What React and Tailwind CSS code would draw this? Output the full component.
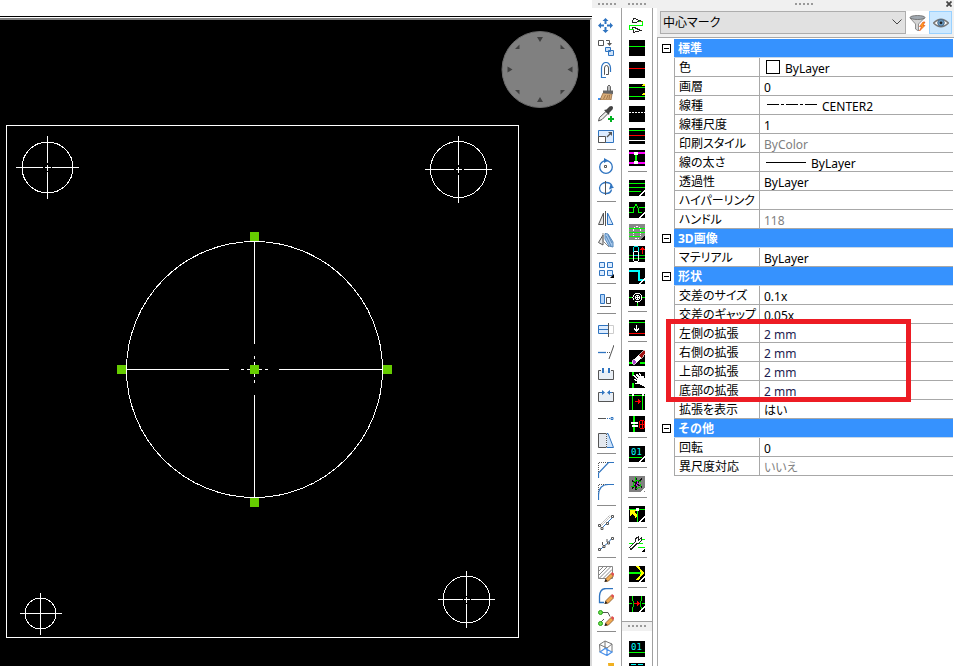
import React, { useState } from "react";

const BLUE = "#2f74c0";
const GREY = "#555555";
const LIME = "#00ff00";

const Pencil = () => (
  <g>
    <path d="M7 16l1-3.500L13 7.500l2.500 2.500L10.500 15z" fill="#f0a850" stroke="#7a4a20" strokeWidth=".7" />
    <path d="M13 7.500l1-1.500 2 1.500v1.500L15 10z" fill="#e05050" />
    <path d="M6.500 16l1-3 2 2z" fill="#222" />
  </g>
);

const modifyIcons = {
  Move: (
    <g fill={BLUE}>
      <path d="M7.500 0L10.500 3H8.500v3H6.500V3H4.500zM7.500 15L10.500 12H8.500V9H6.500v3H4.500zM0 7.500L3 4.500v2h3v2H3v2zM15 7.500L12 4.500v2H9v2h3v2z" />
    </g>
  ),
  Copy: (
    <g fill="none">
      <path d="M.5.5h5v5h-5z" stroke={GREY} />
      <path d="M8 .5h3.500V4" stroke={GREY} />
      <path d="M9 3h5l-2.500 3z" fill={GREY} />
      <path d="M7.500 7.500h5v4h-5zM10.500 10.500h5v5h-5z" fill="#cfe3fa" stroke={BLUE} />
    </g>
  ),
  Offset: (
    <g fill="none">
      <path d="M8 15.500H3.500V6a4.500 5.500 0 019 0v4" stroke={BLUE} strokeWidth="1.200" />
      <path d="M7 12.500h-.5V6a2 2.500 0 014 0v6.500H8" stroke={GREY} />
    </g>
  ),
  "Match properties": (
    <g>
      <path d="M0 15h9" stroke="#4090f0" strokeWidth="2" />
      <path d="M5 9l9 1-1 6H2z" fill="#d8ac78" stroke="#8a6038" strokeWidth=".7" />
      <path d="M5.500 15l2-4M8.500 15l1.500-4M11 15l.5-4" stroke="#8a6038" strokeWidth=".7" />
      <path d="M5 6.500h10V10L5 9z" fill="#666" />
      <path d="M9.500 7V2.500Q11-.5 12.500 2.500V7z" fill="#bbb" stroke="#666" />
    </g>
  ),
  "Pick properties": (
    <g>
      <path d="M.5 15l1-3.500L8 5.500l2 2L4 13.500z" fill="#eee" stroke="#555" />
      <path d="M6 4l2.500-.5 3-3q2-1 3 0t0 3l-3 3-.5 2.500z" fill="#444" />
      <path d="M10 13h6M13 10v6" stroke="#00b020" strokeWidth="2" />
    </g>
  ),
  Scale: (
    <g>
      <path d="M.5 2.500h15v12H.5z" fill="#dcecff" stroke={BLUE} />
      <path d="M.5 8.500h7v6h-7z" fill="#fff" stroke={GREY} />
      <path d="M9 9l4-4" stroke={GREY} strokeWidth="1.200" />
      <path d="M10 4h4v4z" fill={GREY} />
    </g>
  ),
  Rotate: (
    <g fill="none">
      <circle cx="8" cy="9" r="6.300" stroke={BLUE} strokeWidth="1.300" />
      <path d="M6.500 7.500h2v2h-2z" stroke={GREY} />
      <path d="M6 0v5l4.500-2.500z" fill={BLUE} />
    </g>
  ),
  "3D rotate": (
    <g fill="none">
      <path d="M14 6C13 3 10 2.500 8 2.500S1.500 4 1.500 8 5 13.500 8 13.500s5-1.500 5.500-4" stroke={BLUE} strokeWidth="1.300" />
      <path d="M7.500 1v14" stroke={GREY} />
      <path d="M11 9.500l5-2-3.500-3z" fill={BLUE} />
    </g>
  ),
  Mirror: (
    <g>
      <path d="M.5 14.500h5V3z" fill="#e8e8e8" stroke={GREY} />
      <path d="M7.500 1v15" stroke={GREY} />
      <path d="M9.500 3v11.500h5.500z" fill="#cfe3fa" stroke={BLUE} />
    </g>
  ),
  "3D mirror": (
    <g>
      <path d="M.5 10.500L5 3v10z" fill="#e8e8e8" stroke={GREY} />
      <path d="M5 1v8l6 6" fill="none" stroke="#888" />
      <path d="M7 1.500l3 .5 5 8v5l-4-1-4-7z" fill="#a8c8ec" stroke="#5588bb" />
      <path d="M8 4l5 10M10 3l4 8" stroke="#5588bb" />
    </g>
  ),
  Array: (
    <g>
      <path d="M1.500.5h5v5h-5zM9.500.5h5v5h-5zM1.500 8.500h5v5h-5zM9.500 8.500h5v5h-5z" fill="#dcecff" stroke={BLUE} />
      <path d="M16 12v4h-4z" fill="#000" />
    </g>
  ),
  Align: (
    <g>
      <path d="M2.500 2.500h4v9h-4z" fill="#b8d6f8" stroke={BLUE} />
      <path d="M8.500 5.500h4v6h-4z" fill="#fff" stroke={GREY} />
      <path d="M2 14.500h11" stroke={GREY} />
    </g>
  ),
  Trim: (
    <g>
      <path d="M10 3.500h5.500v8H10" fill="none" stroke="#ccc" />
      <path d="M10 3.500H.5v8H10" fill="#dcecff" stroke={BLUE} />
      <path d="M0 7.500h10" stroke={BLUE} />
      <path d="M10.500 1v14" stroke={GREY} />
    </g>
  ),
  Extend: (
    <g>
      <path d="M0 8.500h8" stroke={BLUE} strokeWidth="1.300" />
      <path d="M9 8.500h3" stroke={GREY} strokeDasharray="1 1" />
      <path d="M11 15l5-14" stroke={GREY} />
    </g>
  ),
  Break: (
    <g>
      <path d="M3 4.500H.5v9h15v-9H13" fill="#e8eef5" stroke={GREY} />
      <path d="M5 2v5M11 2v5" stroke={BLUE} strokeWidth="2" />
    </g>
  ),
  Join: (
    <g>
      <path d="M2 4.500H.5v9h15v-9H14" fill="#e8eef5" stroke={GREY} />
      <path d="M4 2l3 2.500L4 7zM12 2L9 4.500 12 7z" fill={BLUE} />
      <path d="M2 4.500h3M11 4.500h3" stroke={BLUE} />
    </g>
  ),
  Lengthen: (
    <g fill="none">
      <path d="M0 8.500h8" stroke={GREY} />
      <path d="M9 8.500h3" stroke={BLUE} strokeDasharray="1 1" />
      <path d="M13 7.500h2v2h-2z" stroke={BLUE} />
    </g>
  ),
  Stretch: (
    <g>
      <path d="M9 1.500h1l5.500 14H9" fill="#cfe3fa" stroke={BLUE} />
      <path d="M8.500 1.500H.5v14h8" fill="#e4e8ee" stroke={GREY} />
      <path d="M8.500 2v14" stroke={GREY} strokeDasharray="1 1" />
    </g>
  ),
  Chamfer: (
    <g fill="none">
      <path d="M.5 10V.5H10" stroke={GREY} strokeDasharray="1 1" />
      <path d="M.5 16v-5L10.500.5H16" stroke={BLUE} strokeWidth="1.200" />
    </g>
  ),
  Fillet: (
    <g fill="none">
      <path d="M.5 10V.5H10" stroke={GREY} strokeDasharray="1 1" />
      <path d="M.5 16v-5Q1 .5 10.500.5H16" stroke={BLUE} strokeWidth="1.200" />
    </g>
  ),
  "Edit line": (
    <g fill="none">
      <path d="M1 12L12 1M2 13L13 2" stroke="#aaa" strokeDasharray="2 1" />
      <path d="M4 14L15 3" stroke={BLUE} />
      <path d="M.5 10.500h2v2h-2zM3 13.500h2v2H3zM8.500 8.500h2v2h-2zM13.500 1.500h2v2h-2z" stroke={GREY} fill="#fff" />
    </g>
  ),
  "Edit polyline": (
    <g fill="none">
      <path d="M2 14l4-4 4-3 4-5" stroke={BLUE} />
      <path d="M.5 12.500h2v2h-2zM5 9.500h2v2H5zM9.500 6h2v2h-2zM13.500 1.500h2v2h-2z" stroke={GREY} fill="#fff" />
      <path d="M4.500 6v3M9 3v3" stroke={GREY} />
    </g>
  ),
  "Edit hatch": (
    <g>
      <path d="M.5.5h14v12H.5z" fill="#fff" stroke="#888" />
      <path d="M1 5l4-4M1 9l8-8M1 12.500L12.500 1M5 12.500l9-9M9 12.500l5-5" stroke="#888" />
      <Pencil />
    </g>
  ),
  "Edit spline": (
    <g fill="none">
      <path d="M6 14.500H1.500V8Q2 .5 8 .5h7" stroke={BLUE} strokeWidth="1.300" />
      <Pencil />
    </g>
  ),
  "Edit vertices": (
    <g>
      <path d="M3 12l3-3M4 2.500h6l2 4" fill="none" stroke={GREY} />
      <circle cx="2.500" cy="13.500" r="2" fill="#70e050" stroke="#20a010" />
      <circle cx="2.500" cy="2.500" r="2" fill="#70e050" stroke="#20a010" />
      <Pencil />
    </g>
  ),
  "3D box": (
    <g fill="none">
      <path d="M1.500 4.500L7 1l7 3-5 4zM1.500 4.500l.5 7.500M14 4v8M7 1v8" stroke="#777" />
      <path d="M2 12l5-3.500 7 3.500-5 3.500zM9 8v7.500" stroke="#4a90e8" strokeWidth="1.200" />
    </g>
  ),
  Explode: (
    <g>
      <path d="M0 8h10v8H0z" fill="#ccc" stroke={GREY} />
      <path d="M10 1h6v8l-5 3z" fill="#f0b020" />
    </g>
  ),
};

const Corner = () => <path d="M15.500 9.500v2l-4 4h-2z" fill="#fff" />;

const expressIcons = {
  "Flip direction": (
    <g fill="none">
      <path d="M4.500 0l-1 4.500h3L11.500 3zM4.500 14.500l-1-5h2l6 3z" stroke="#222" />
      <path d="M10 3.500h3.500v4H.5v4h4" stroke={LIME} />
      <path d="M11.500 3h1.500v1h-1.500z" fill="#e00" />
    </g>
  ),
  "Green line": <path d="M0 6.500h16" stroke={LIME} />,
  "Red line": <path d="M0 6.500h16" stroke="#f00" />,
  "Line pair": (
    <g fill="none">
      <path d="M0 3.500h16M0 12.500h16" stroke={LIME} />
      <path d="M13 1.500h2V0M13 10.500h2V9" stroke="#ff0" strokeWidth="1.500" />
    </g>
  ),
  "Dashed line": <path d="M0 6.500h16" stroke="#fff" strokeDasharray="2 1" />,
  "Line stack": (
    <g>
      <path d="M0 2.500h16" stroke={LIME} />
      <path d="M0 7.500h16" stroke="#f00" />
      <path d="M0 12.500h16" stroke="#fff" />
    </g>
  ),
  Span: (
    <g>
      <path d="M0 3h16M0 13h16" stroke="#f0f" strokeWidth="2" />
      <path d="M7 3v10" stroke={LIME} strokeWidth="2" />
      <path d="M5 2h4v3H5zM5 11h4v3H5z" fill="#fff" />
    </g>
  ),
  "Layer walk": (
    <g>
      <path d="M0 3.500h16M0 7.500h16M0 11.500h12" stroke={LIME} />
      <Corner />
    </g>
  ),
  "Break line": (
    <g fill="none">
      <path d="M0 10.500h4.500v-3l2-5h1l2 5v3h3M0 5.500h5M10 5.500h6" stroke={LIME} />
      <Corner />
    </g>
  ),
  "Hide layer": (
    <g fill="none">
      <path d="M0 0h16v16H0z" fill="#888" />
      <path d="M4.500 4.500l2-2h3l2 2v7l-2 3h-3l-2-3z" stroke="#fff" strokeDasharray="2 1" />
      <path d="M0 4.500h16M0 8.500h16M0 12.500h11" stroke={LIME} />
      <path d="M16 11v5h-5z" fill="#000" />
    </g>
  ),
  Chain: (
    <g fill="none">
      <path d="M0 9.500h16M0 12.500h16" stroke="#0c0" />
      <rect x="4.500" y=".5" width="5" height="9" rx="2" stroke="#0ee" />
      <rect x="4.500" y="5.500" width="5" height="10" rx="2" stroke="#fff" />
      <path d="M13.500 8V3" stroke="#f00" strokeWidth="1.500" />
      <path d="M11 4h5l-2.500-3z" fill="#f00" />
    </g>
  ),
  Step: (
    <g fill="none">
      <path d="M0 3h10v9h6" stroke="#0ff" strokeWidth="2" />
      <Corner />
    </g>
  ),
  Target: (
    <g fill="none">
      <path d="M8.500 11v5M0 7.500h4M12 7.500h4" stroke={LIME} />
      <circle cx="8.500" cy="7.500" r="4.500" stroke="#fff" />
      <circle cx="8.500" cy="7.500" r="2" stroke="#fff" />
      <path d="M8.500 6v3M7 7.500h3" stroke="#fff" />
    </g>
  ),
  "Drop down": (
    <g fill="none">
      <path d="M0 2.500h16" stroke={LIME} />
      <path d="M0 13.500h16" stroke="#f00" />
      <path d="M7.500 5v6M5 8.500l2.500 2.500L10 8.500" stroke="#fff" />
    </g>
  ),
  Erase: (
    <g>
      <path d="M0 13h5M11 13h5" stroke={LIME} strokeWidth="2" />
      <path d="M9.500 5.500L15 0h1v4l-4 5z" fill="#a01010" stroke="#fff" strokeWidth=".7" />
      <path d="M5 9l4.500-4L12 8l-4.500 4.500z" fill="#fff" />
      <path d="M3 11l2-2 3 3.500L6 14H4z" fill="#b040d0" stroke="#fff" strokeWidth=".7" />
    </g>
  ),
  Grab: (
    <g>
      <path d="M4 0v4M4 11v5" stroke={LIME} strokeWidth="2" />
      <path
        d="M4.500 3.500l4 3M7.500 2.500l3 3M10.500 1.500l2 3.500M5 7.500l3 1M6 11.500h3M14 4l1 3"
        stroke="#fff"
        strokeWidth="1.500"
      />
      <path d="M8 6l4-2 4 3v8l-4-2-4-2z" fill="#fff" />
    </g>
  ),
  "Move box": (
    <g fill="none">
      <path d="M0 1.500h16M3.500 0v16M13.500 0v16" stroke={LIME} />
      <path d="M6 7.500h5" stroke="#f00" />
      <path d="M9 5l3 2.500L9 10z" fill="#f00" />
      <path d="M3 0h2v2H3zM13 0h2v2h-2z" fill="#fff" />
    </g>
  ),
  "Layer lock": (
    <g fill="none">
      <path d="M5 0v16" stroke={LIME} strokeWidth="2" />
      <path d="M2 7h7M3 10h6" stroke="#fff" strokeWidth="2" />
      <path d="M10.500 5.500l1-1h3l1 1v6l-1 1h-3l-1-1zM10 8.500h6" stroke="#f00" />
      <path d="M13.500 4v9" stroke="#f00" />
    </g>
  ),
  "Number layer": (
    <g>
      <text x="2" y="9" fill="#0ff" fontSize="9" fontFamily="DejaVu Sans Mono">01</text>
      <path d="M0 11.500h13" stroke={LIME} />
      <Corner />
    </g>
  ),
  "Freeze layer": (
    <g fill="none">
      <path d="M0 0h16v16H0z" fill="#808080" />
      <path d="M3 12L13 3M7 2v12M3 5l10 6" stroke="#111" strokeWidth="1.500" />
      <path d="M2 10h3l-1-3 4-3 4 2M12 8l-1 3-4 2M6 1v3" stroke="#0c0" />
      <path d="M7 10l2-4" stroke="#c0f" />
      <path d="M16 11v3l-2 2h-3z" fill="#fff" />
    </g>
  ),
  "Select layer": (
    <g>
      <path d="M0 3.500h16M8.500 3v13" stroke={LIME} />
      <path d="M1 4h6L5.500 6l3 3.500-2 2-3-3.500L1 10z" fill="#ff0" />
      <path d="M7 2h3v3H7z" fill="#fff" />
      <Corner />
    </g>
  ),
  "Layer tools": (
    <g fill="none">
      <path d="M8 3.500h8M0 7.500h14M9 11.500h7" stroke={LIME} />
      <path d="M.5 11.500L6 6V3l3-2v3h1l2-2v3L9.500 7.500 7.500 8 2 13.500z" fill="#fff" stroke="#222" />
      <path d="M16 12v4h-4z" fill="#000" />
    </g>
  ),
  "Next layer": (
    <g fill="none">
      <path d="M0 7h12" stroke={LIME} strokeWidth="2" />
      <path d="M8 0l6 7-6 7" stroke="#ff0" strokeWidth="2" />
      <Corner />
    </g>
  ),
  "Merge layers": (
    <g fill="none">
      <path d="M3.500 0v5M3.500 11v5M12.500 0v5M12.500 11v4M0 7.500h3M13 7.500h3" stroke={LIME} />
      <path d="M4.500 5v6M11.500 5v6" stroke="#0c0" />
      <path d="M5 7.500h4" stroke="#f00" />
      <path d="M8 5l3 2.500L8 10z" fill="#f00" />
      <Corner />
    </g>
  ),
};

const secondaryIcons = {
  "Number only": (
    <g>
      <text x="2" y="9" fill="#0ff" fontSize="9" fontFamily="DejaVu Sans Mono">01</text>
      <path d="M0 11.500h16" stroke={LIME} />
    </g>
  ),
  "Number list": <path d="M2 1.500h5M9 1.500h5" stroke="#0ff" />,
};

const modifyTools = [
  ["Move", "Copy", "Offset", "Match properties", "Pick properties", "Scale"],
  ["Rotate", "3D rotate"],
  ["Mirror", "3D mirror"],
  ["Array"],
  ["Align"],
  ["Trim", "Extend", "Break", "Join", "Lengthen", "Stretch"],
  ["Chamfer", "Fillet"],
  ["Edit line", "Edit polyline"],
  ["Edit hatch", "Edit spline", "Edit vertices"],
  ["3D box", "Explode"],
];

const expressTools = [
  ["Flip direction", "Green line", "Red line", "Line pair", "Dashed line", "Line stack", "Span"],
  ["Layer walk", "Break line", "Hide layer", "Chain", "Step", "Target"],
  ["Drop down"],
  ["Erase", "Grab", "Move box", "Layer lock"],
  ["Number layer"],
  ["Freeze layer"],
  ["Select layer"],
  ["Layer tools"],
  ["Next layer"],
  ["Merge layers"],
];

const lightTiles = ["Flip direction", "Layer tools"];

const groups = [
  {
    title: "標準",
    rows: [
      { name: "色", value: "ByLayer", sample: "swatch" },
      { name: "画層", value: "0" },
      { name: "線種", value: "CENTER2", sample: "center" },
      { name: "線種尺度", value: "1" },
      { name: "印刷スタイル", value: "ByColor", readOnly: true },
      { name: "線の太さ", value: "ByLayer", sample: "solid" },
      { name: "透過性", value: "ByLayer" },
      { name: "ハイパーリンク", value: "" },
      { name: "ハンドル", value: "118", readOnly: true },
    ],
  },
  { title: "3D画像", rows: [{ name: "マテリアル", value: "ByLayer" }] },
  {
    title: "形状",
    rows: [
      { name: "交差のサイズ", value: "0.1x" },
      { name: "交差のギャップ", value: "0.05x" },
      { name: "左側の拡張", value: "2 mm", changed: true },
      { name: "右側の拡張", value: "2 mm", changed: true },
      { name: "上部の拡張", value: "2 mm", changed: true },
      { name: "底部の拡張", value: "2 mm", changed: true },
      { name: "拡張を表示", value: "はい" },
    ],
  },
  {
    title: "その他",
    rows: [
      { name: "回転", value: "0" },
      { name: "異尺度対応", value: "いいえ", readOnly: true },
    ],
  },
];

const Grip = () => (
  <div className="flex h-2 shrink-0 items-center justify-center gap-0.5 bg-[#f0f0f0]">
    {[0, 1, 2, 3, 4].map((i) => (
      <span key={i} className="size-0.5 bg-[#999999]" />
    ))}
  </div>
);

const ToolGroups = ({ tools, icons, dark }) => (
  <div className={`flex flex-col pt-[7px] ${dark ? "pl-1.5" : "pl-[5px]"}`}>
    {tools.map((group, i) => (
      <React.Fragment key={i}>
        {i > 0 && (
          <div className="h-2 shrink-0 pt-0.5">
            <div className="h-px w-[19px] bg-[#8c8c8c]" />
          </div>
        )}
        {group.map((name) => (
          <button key={name} aria-label={name} className="flex h-[22px] w-[18px] shrink-0 items-center justify-center">
            <svg viewBox="0 0 16 16" className="size-4" shapeRendering={dark ? "crispEdges" : "auto"}>
              {dark && !lightTiles.includes(name) && <path d="M0 0h16v16H0z" fill="#000" />}
              {icons[name]}
            </svg>
          </button>
        ))}
      </React.Fragment>
    ))}
  </div>
);

const CenterMark = ({ x, y, r, ext, gap }) => (
  <g>
    <circle cx={x} cy={y} r={r} />
    <path
      d={`M${x - ext} ${y}H${x - gap}M${x + gap} ${y}H${x + ext}M${x} ${y - ext}V${y - gap}M${x} ${y + gap}V${y + ext}M${x - 3} ${y}h6M${x} ${y - 3}v6`}
    />
  </g>
);

const grips = [
  [250, 232],
  [250, 365],
  [250, 498],
  [117, 365],
  [383, 365],
];

const Drawing = () => (
  <svg width="590" height="646" viewBox="0 20 590 646" className="block shrink-0">
    <g fill="none" stroke="#fff" shapeRendering="crispEdges">
      <path d="M6.500 125.500h512v512h-512z" />
      <CenterMark x={47.5} y={167.5} r={25.5} ext={31.5} gap={4.5} />
      <CenterMark x={458.5} y={169.5} r={28} ext={33.5} gap={5} />
      <CenterMark x={40.5} y={613.5} r={15.5} ext={21} gap={3} />
      <CenterMark x={466.5} y={599.5} r={23.5} ext={28.5} gap={4} />
      <circle cx="254.500" cy="369.500" r="128" />
      <path d="M126 369.500h103M241 369.500h3M247 369.500h15M265 369.500h3M279 369.500h104" />
      <path d="M254.500 241v103M254.500 356v3M254.500 362v15M254.500 380v3M254.500 395v103" />
    </g>
    {grips.map(([x, y]) => (
      <rect key={`${x}-${y}`} x={x} y={y} width="9" height="9" fill="#66cc00" />
    ))}
    <circle cx="540" cy="69.500" r="38" fill="#808080" stroke="#6c6c6c" />
    <g fill="#404040">
      {[0, 90, 180, 270].map((a) => (
        <path key={a} d="M537 37h6l-3 5z" transform={`rotate(${a} 540 69.500)`} />
      ))}
      {[0, 90, 180, 270].map((a) => (
        <path key={a} d="M515 49l4.500-4.500v4.500z" transform={`rotate(${a} 540 69.500)`} />
      ))}
    </g>
  </svg>
);

const Sample = ({ kind }) => {
  if (kind === "swatch") return <span className="ml-0.5 mr-[5px] size-3.5 shrink-0 border border-black bg-white" />;
  if (kind === "center")
    return (
      <svg viewBox="0 0 50 2" className="ml-[3px] mr-[5px] h-0.5 w-[50px] shrink-0" shapeRendering="crispEdges">
        <path d="M0 .5h12M14 .5h3M19 .5h12M33 .5h3M38 .5h12" stroke="#000" />
      </svg>
    );
  return <span className="ml-0.5 mr-[5px] h-px w-10 shrink-0 bg-black" />;
};

const PropertyRow = ({ row }) => {
  const [value, setValue] = useState(row.value);
  const color = row.readOnly ? "text-[#808080]" : row.changed ? "text-[#1c1c50]" : "text-black";

  return (
    <tr className="h-[19px]">
      <td />
      <th
        scope="row"
        className="border-x border-b border-[#a8a8a8] p-0 pl-1 text-left font-normal whitespace-nowrap [font-feature-settings:'palt']"
      >
        <label htmlFor={row.name} className="block h-[18px] overflow-hidden leading-5">
          {row.name}
        </label>
      </th>
      <td className="border-b border-[#a8a8a8] p-0 pl-1">
        <div className="flex h-[18px] items-center">
          {row.sample && <Sample kind={row.sample} />}
          <input
            id={row.name}
            value={value}
            readOnly={row.readOnly}
            onChange={(e) => setValue(e.target.value)}
            className={`h-[18px] w-full min-w-0 pt-0.5 leading-4 outline-none [font-feature-settings:'palt'] ${color}`}
          />
        </div>
      </td>
    </tr>
  );
};

const PropertyGroup = ({ group }) => {
  const [open, setOpen] = useState(true);

  return (
    <tbody>
      <tr className="h-[19px]">
        <td className="p-0">
          <button
            aria-label={group.title}
            aria-expanded={open}
            onClick={() => setOpen(!open)}
            className="ml-1 flex size-[9px] items-center justify-center border border-black bg-white"
          >
            <span className="h-px w-[5px] bg-black" />
          </button>
        </td>
        <th colSpan={2} className="border-b border-[#c8d8e8] bg-[#3692fe] p-0 pl-1 text-left font-bold text-white">
          <div className="h-[18px] overflow-hidden leading-5">{group.title}</div>
        </th>
      </tr>
      {open && group.rows.map((row) => <PropertyRow key={row.name} row={row} />)}
    </tbody>
  );
};

const Properties = () => (
  <aside className="ml-1 flex w-[297px] shrink-0 flex-col">
    <div className="flex h-[29px] items-center bg-[#f0f0f0] pl-[3px]">
      <div className="relative w-[246px]">
        <select
          aria-label="Selection"
          className="block h-[23px] w-full appearance-none border border-[#adadad] bg-[#e1e1e1] pl-0.5 text-xs leading-5 [font-feature-settings:'palt']"
        >
          <option>中心マーク</option>
        </select>
        <svg viewBox="0 0 10 6" className="pointer-events-none absolute top-2 right-1 h-1.5 w-2.5" fill="none">
          <path d="M.5.5L5 5l4.500-4.500" stroke="#444" />
        </svg>
      </div>
      <button aria-label="Quick select" className="flex h-[23px] w-[23px] items-center justify-center bg-white">
        <svg viewBox="0 0 18 16" className="h-4 w-[18px]">
          <path d="M1 3l5.500 6v5l3 2V9l6-6z" fill="#d4d4d4" stroke="#777" strokeWidth=".8" />
          <ellipse cx="8.500" cy="2.500" rx="7.500" ry="2" fill="#a0a8b0" stroke="#666" strokeWidth=".8" />
          <path d="M14 7l-3.500 4.500h2L10.500 16l5.500-5.500h-2L16 7z" fill="#ffa020" stroke="#e04010" strokeWidth=".6" />
        </svg>
      </button>
      <button
        aria-label="Toggle visibility"
        className="flex h-[23px] w-[23px] items-center justify-center border border-[#99d1ff] bg-[#cce8ff]"
      >
        <svg viewBox="0 0 16 12" className="h-3 w-4">
          <path d="M.5 6Q8-1.500 15.500 6 8 13.500.5 6z" fill="#fff" stroke="#777" strokeWidth="1.300" />
          <circle cx="8" cy="5.800" r="3.300" fill="#6a9cc4" stroke="#4a6a88" />
          <circle cx="8" cy="5.800" r="1.400" fill="#222" />
        </svg>
      </button>
    </div>
    <div className="relative flex-1 border-t border-l border-[#a8a8a8] pt-px pr-px">
      <table className="w-full table-fixed border-separate border-spacing-0 text-xs">
        <colgroup>
          <col className="w-4" />
          <col className="w-[86px]" />
          <col />
        </colgroup>
        {groups.map((group) => (
          <PropertyGroup key={group.title} group={group} />
        ))}
      </table>
      <div className="pointer-events-none absolute top-[281px] left-2 h-[83px] w-[245px] border-5 border-[#ed1c24]" />
    </div>
  </aside>
);

export default function App() {
  return (
    <div className="flex h-screen overflow-hidden bg-white font-['Noto_Sans','Noto_Sans_CJK_JP',sans-serif] text-black">
      <main className="flex min-w-0 flex-1 flex-col pt-4">
        <div className="h-px shrink-0 bg-black" />
        <div className="mt-px min-h-0 flex-1 overflow-hidden border-t-2 border-r-2 border-t-[#808080] border-r-[#d8d8d8] bg-black">
          <Drawing />
        </div>
      </main>
      <div className="flex min-w-0 shrink-0 flex-col">
        <div className="relative flex h-2 bg-[#f0f0f0]">
          <div className="w-[29px]">
            <Grip />
          </div>
          <div className="w-8">
            <Grip />
          </div>
          <div className="flex-1">
            <Grip />
          </div>
          <button aria-label="Close" className="absolute top-px right-0.5">
            <svg viewBox="0 0 6 6" className="size-1.5">
              <path d="M.5.5l5 5M5.500.5l-5 5" stroke="#444" strokeWidth="1.800" />
            </svg>
          </button>
        </div>
        <div className="flex min-h-0 flex-1">
          <div className="w-[30px] overflow-hidden border-r border-[#a0a0a0]">
            <ToolGroups tools={modifyTools} icons={modifyIcons} />
          </div>
          <div className="w-[31px] overflow-hidden border-r border-[#a0a0a0]">
            <ToolGroups tools={expressTools} icons={expressIcons} dark />
            <div className="mt-1.5 border-t border-[#a0a0a0] bg-[#f0f0f0] pb-px">
              <Grip />
            </div>
            <ToolGroups tools={[["Number only", "Number list"]]} icons={secondaryIcons} dark />
          </div>
          <Properties />
        </div>
      </div>
    </div>
  );
}
